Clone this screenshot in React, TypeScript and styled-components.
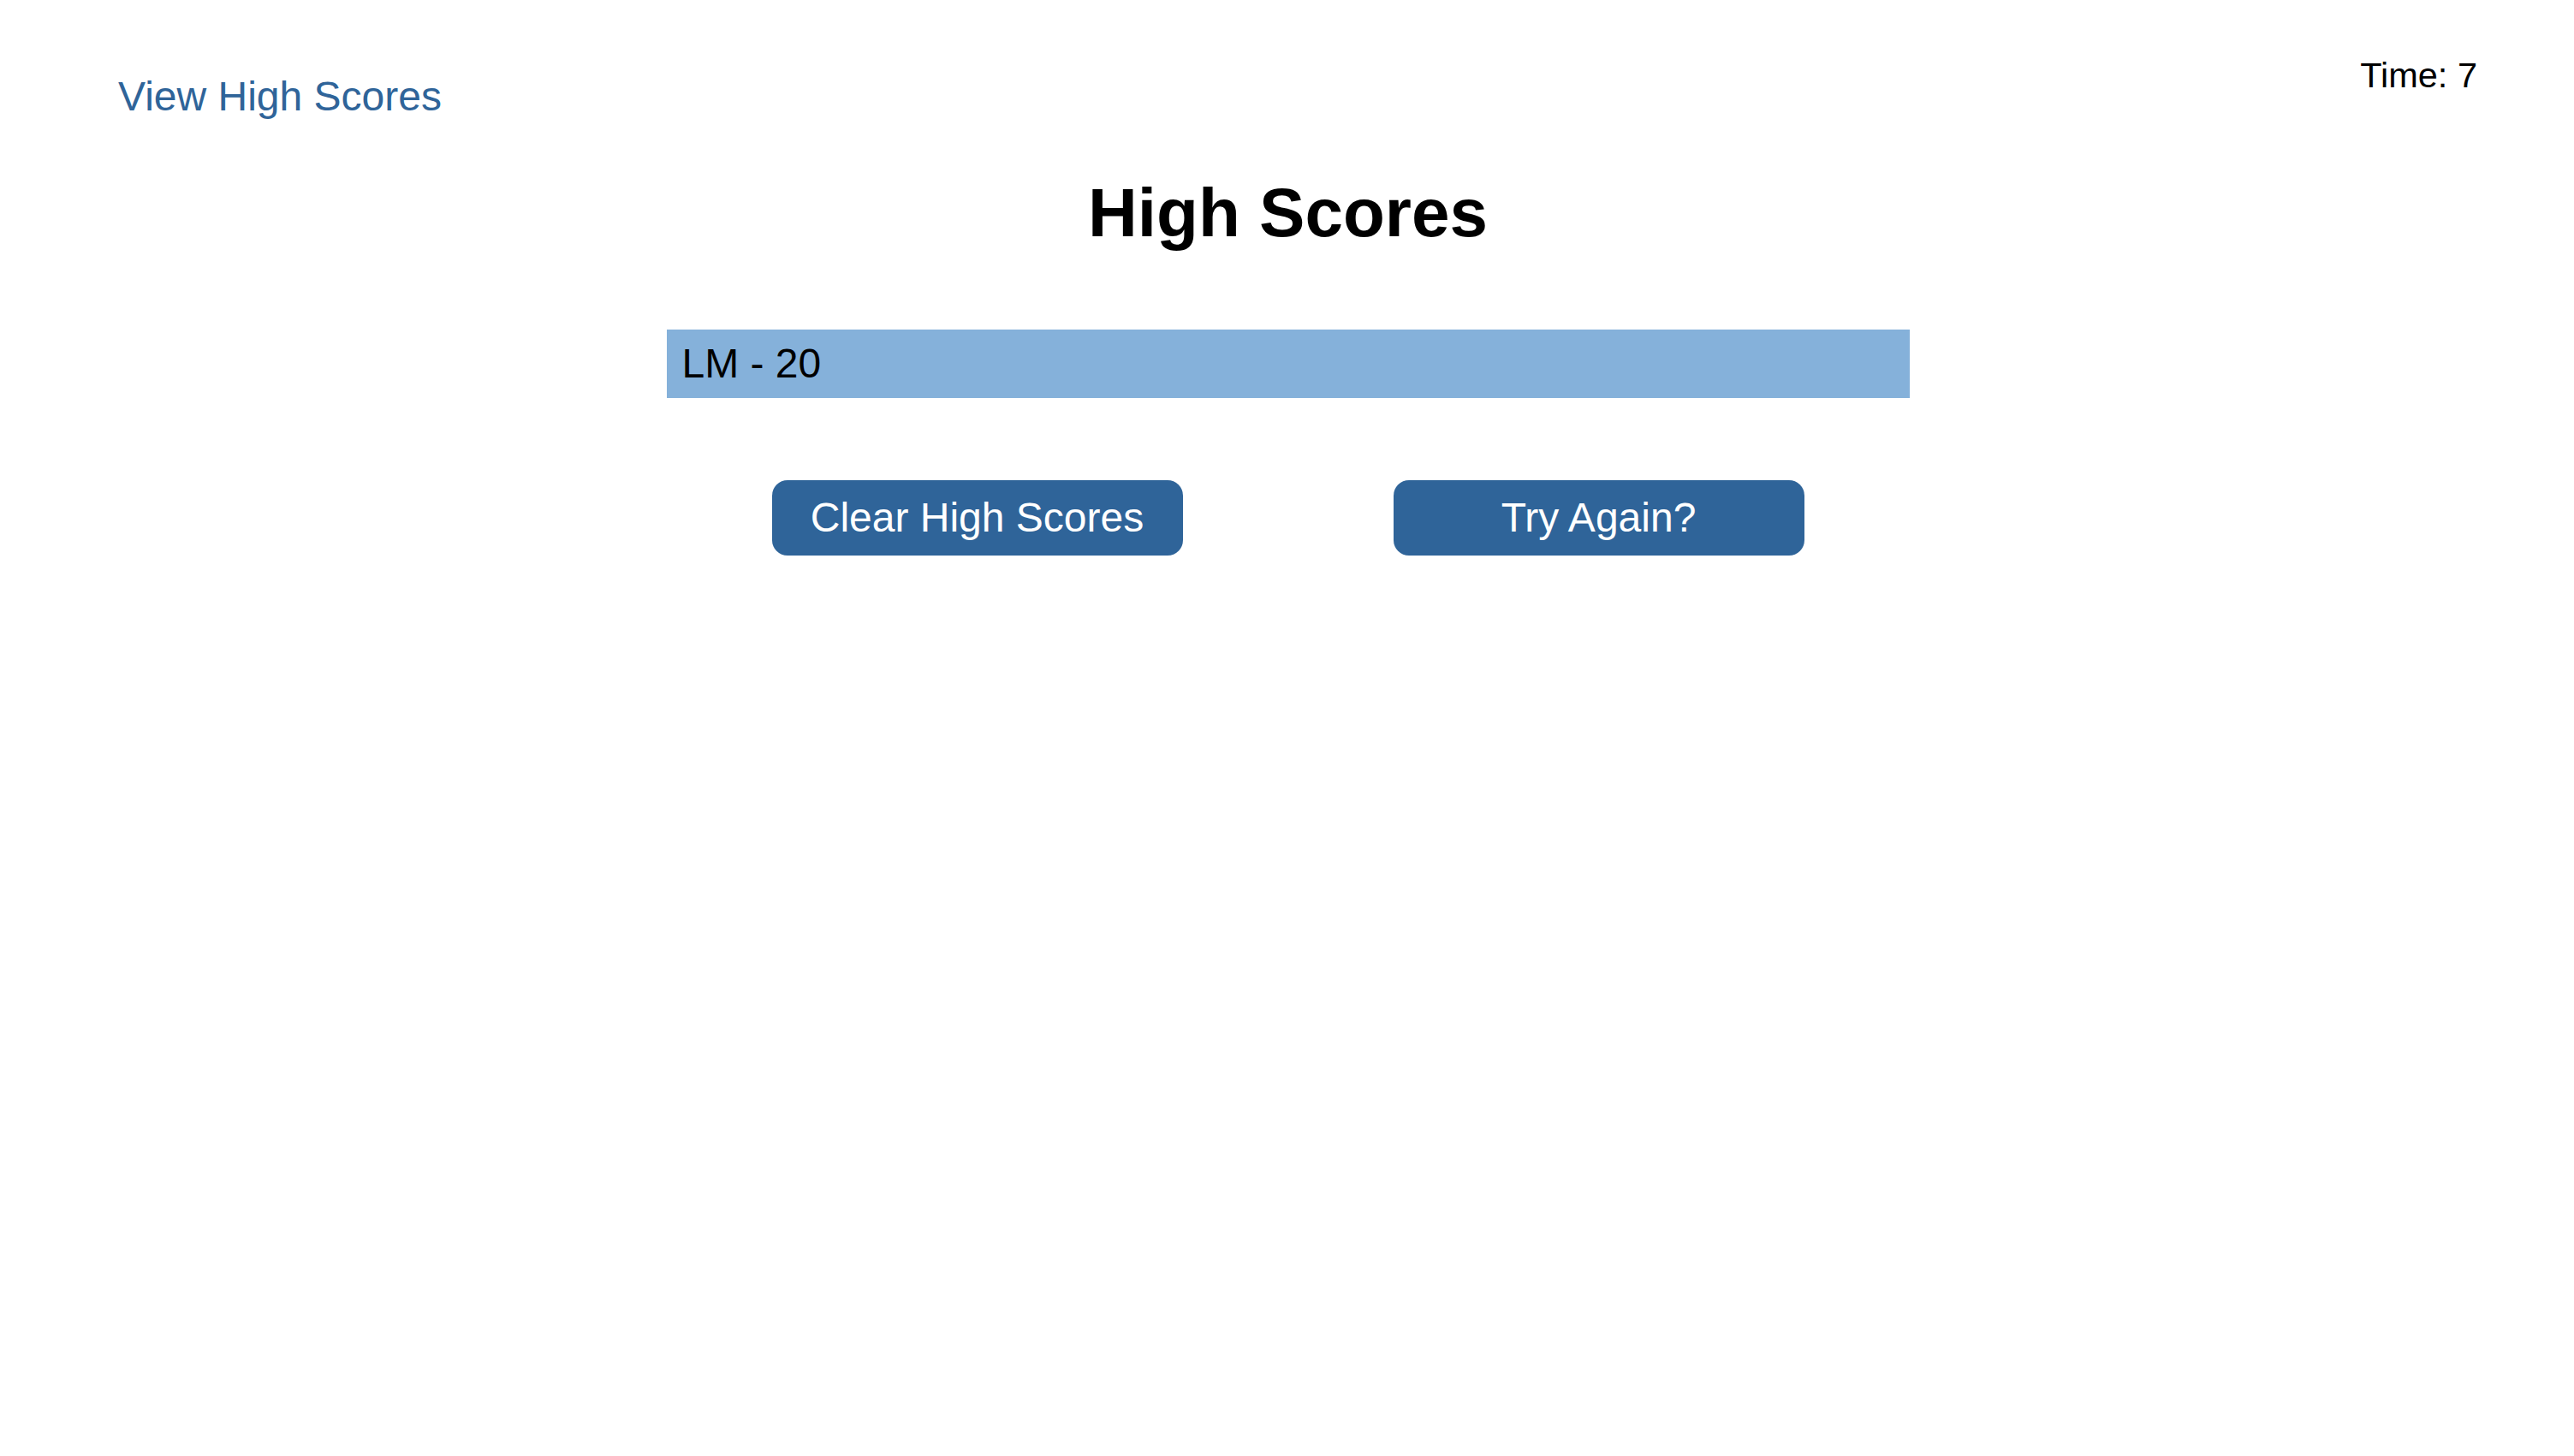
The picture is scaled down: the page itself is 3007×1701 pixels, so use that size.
import React from "react";
import styled, { createGlobalStyle } from "styled-components";

const GlobalStyle = createGlobalStyle`
  html, body {
    margin: 0;
    padding: 0;
    background: #ffffff;
    font-family: "Liberation Sans", Arial, Helvetica, sans-serif;
  }
`;

const Page = styled.div`
  display: flex;
  flex-direction: column;
  min-height: 1701px;
`;

const Header = styled.header`
  display: flex;
  justify-content: space-between;
  align-items: flex-start;
  padding: 67px 113px 0 138px;
`;

const HighScoresLink = styled.a`
  margin-top: 22px;
  font-size: 48px;
  line-height: 1;
  color: #2f6499;
  text-decoration: none;
  cursor: pointer;
`;

const Timer = styled.div`
  font-size: 41.5px;
  line-height: 1;
  color: #000000;
`;

const Main = styled.main`
  display: flex;
  flex-direction: column;
  align-items: center;
  padding-left: 2px;
`;

const Title = styled.h1`
  margin: 72px 0 0;
  font-size: 80px;
  line-height: 1;
  font-weight: 700;
  color: #000000;
`;

const ScoreList = styled.ol`
  list-style: none;
  margin: 96px 0 0;
  padding: 0;
  width: 1452px;
`;

const ScoreItem = styled.li`
  height: 80px;
  line-height: 80px;
  padding: 0 18px;
  background: #85b1da;
  font-size: 48px;
  color: #000000;
`;

const ButtonRow = styled.div`
  display: flex;
  justify-content: space-around;
  width: 1452px;
  margin-top: 96px;
`;

const ActionButton = styled.button`
  width: 480px;
  height: 88px;
  border: none;
  border-radius: 18px;
  background: #2f6499;
  color: #ffffff;
  font-family: "Liberation Sans", Arial, Helvetica, sans-serif;
  font-size: 48px;
  line-height: 88px;
  padding: 0;
  cursor: pointer;
`;

export default function App() {
  return (
    <>
      <GlobalStyle />
      <Page>
        <Header>
          <HighScoresLink>View High Scores</HighScoresLink>
          <Timer>Time: 7</Timer>
        </Header>
        <Main>
          <Title>High Scores</Title>
          <ScoreList>
            <ScoreItem>LM - 20</ScoreItem>
          </ScoreList>
          <ButtonRow>
            <ActionButton>Clear High Scores</ActionButton>
            <ActionButton>Try Again?</ActionButton>
          </ButtonRow>
        </Main>
      </Page>
    </>
  );
}
